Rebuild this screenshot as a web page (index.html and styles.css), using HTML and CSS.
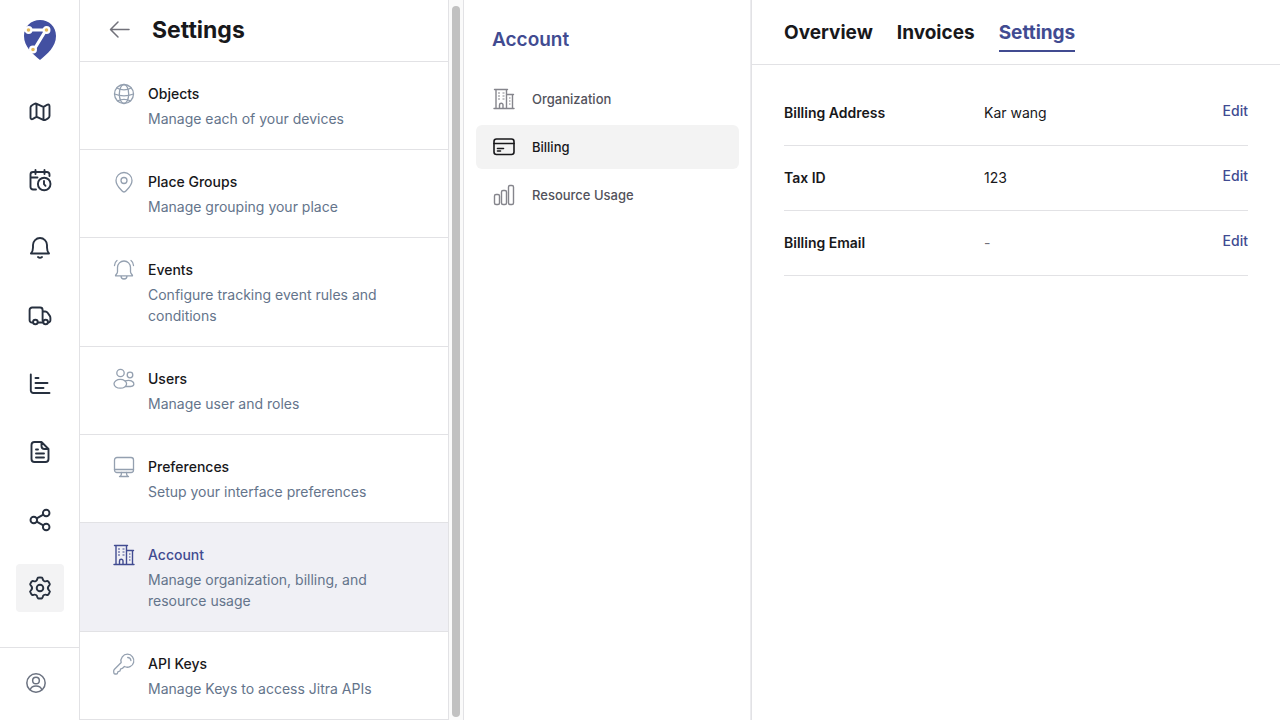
FILE: index.html
```html
<!DOCTYPE html>
<html lang="en">
<head>
<meta charset="utf-8">
<meta name="viewport" content="width=device-width, initial-scale=1">
<title>Account billing settings</title>
<link rel="stylesheet" href="styles.css">
</head>
<body>
<svg class="sprite" aria-hidden="true">
  <symbol id="building" viewBox="0 0 24 24">
    <path d="M2 21.500h20M4 21.500v-19M14.500 21.500v-19M2.500 2.500h13M14.500 7.500h7M20.500 7.500v14M7.500 21.500v-3.500a1.750 1.750 0 0 1 3.500 0v3.500" stroke-width="1.400"/>
    <path d="M6 6h2M6 9h2M6 12h2M10.500 6h2M10.500 9h2M10.500 12h2M17 11h1.500M17 14h1.500M17 17h1.500" stroke-width="1.200" stroke-linecap="butt"/>
  </symbol>
</svg>
<div class="app">
  <nav class="rail" aria-label="Main">
    <a class="logo" href="#" aria-label="Home">
      <svg width="34" height="42" viewBox="0 0 34 42">
        <path d="M17 1C26 1 33 7.500 33 17C33 28 24 35 17 41C10 35 1 28 1 17C1 7.500 8 1 17 1Z" fill="#4350a1"/>
        <path d="M0 11H6.500H23L10.500 31.500" fill="none" stroke="#fff" stroke-width="3.200" stroke-linejoin="round"/>
        <g fill="#e5b95b" stroke="#fff" stroke-width="2.200"><circle cx="5.500" cy="11" r="2.900"/><circle cx="23.500" cy="11" r="2.900"/><circle cx="10" cy="30.500" r="2.900"/></g>
      </svg>
    </a>
    <a class="rail-item" href="#" aria-label="Map"><svg viewBox="0 0 24 24"><path d="M2.500 7.600c0-1.200.4-1.700 1.500-2.300l2.200-1.300c1.100-.6 1.600-.7 2.600-.2l5.300 2.600c1 .5 1.500.4 2.400-.1l2.600-1.500c1.300-.7 2.400-.1 2.400 1.400v9.900c0 1.200-.4 1.700-1.500 2.300l-2.200 1.300c-1.100.6-1.600.7-2.600.2l-5.300-2.600c-1-.5-1.500-.4-2.400.1L4.900 18.900c-1.300.7-2.400.1-2.400-1.400zM8.500 4v13M15.500 6.600V20"/></svg></a>
    <a class="rail-item" href="#" aria-label="Schedule"><svg viewBox="0 0 24 24"><path d="M8 21.500H5a2.500 2.500 0 0 1-2.500-2.500V6.500A2.500 2.500 0 0 1 5 4h14a2.500 2.500 0 0 1 2.500 2.500V8M7.500 2v4M16.500 2v4M2.500 9.500h7"/><circle cx="16.200" cy="16" r="6.300"/><path d="M16 12.900v3.300l1.500 1.600"/></svg></a>
    <a class="rail-item" href="#" aria-label="Alerts"><svg viewBox="0 0 24 24"><path d="M3 17.500h18c-1.500-1.600-2-3.500-2-6V9a7 7 0 0 0-14 0v2.500c0 2.500-.5 4.400-2 6zM10 21q2 1.700 4 0"/></svg></a>
    <a class="rail-item" href="#" aria-label="Vehicles"><svg viewBox="0 0 24 24"><path d="M5 18.500H3.800a2.200 2.200 0 0 1-2.200-2.200V6A2.500 2.500 0 0 1 4.100 3.500h8A2.500 2.500 0 0 1 14.600 6v10.500M9.800 18.500h5.400M14.600 7.500h2.700c1 0 1.700.4 2.300 1.200l2.200 3.200c.5.700.6 1.300.6 2.100v2.200a2.300 2.300 0 0 1-2.300 2.300"/><circle cx="7.400" cy="18" r="2.300"/><circle cx="17.600" cy="18" r="2.300"/></svg></a>
    <a class="rail-item" href="#" aria-label="Reports"><svg viewBox="0 0 24 24"><path d="M2.800 2.500v16a2.500 2.500 0 0 0 2.500 2.500h16.200M7.500 6h3M7.500 11h12M7.500 16h8"/></svg></a>
    <a class="rail-item" href="#" aria-label="Documents"><svg viewBox="0 0 24 24"><path d="M13.500 2H6.500a3 3 0 0 0-3 3v14a3 3 0 0 0 3 3h11a3 3 0 0 0 3-3V9zM13.500 2v4a3 3 0 0 0 3 3h4M8 9.500h2M8 13.500h8M8 17.500h8"/></svg></a>
    <a class="rail-item" href="#" aria-label="Share"><svg viewBox="0 0 24 24"><circle cx="5.800" cy="12" r="3.300"/><circle cx="18.200" cy="5" r="3.300"/><circle cx="18.200" cy="19" r="3.300"/><path d="M8.700 10.400l6.600-3.800M8.700 13.600l6.600 3.800"/></svg></a>
    <a class="rail-item active" href="#" aria-label="Settings" aria-current="page"><svg viewBox="0 0 24 24"><circle cx="12" cy="12" r="3.300"/><path d="M21.300 7.100l-.5-.9c-.4-.6-.6-1-.9-1.100-.4-.2-.8-.1-1.500.1-1.800.6-3.400-.4-3.700-2.200-.3-.8-.4-1.100-.8-1.300C13.500 1.500 13.100 1.500 12 1.500s-1.500 0-1.900.2c-.4.200-.5.500-.8 1.300C9 4.800 7.400 5.800 5.600 5.200c-.7-.2-1.100-.3-1.500-.1-.3.100-.5.500-.9 1.100l-.5.900c-.4.700-.6 1-.5 1.400 0 .3.300.6.800 1.100 1.400 1.500 1.400 3.300 0 4.800-.5.500-.8.800-.8 1.100-.1.400.1.700.5 1.400l.5.900c.4.600.6 1 .9 1.100.4.200.8.100 1.500-.1 1.800-.6 3.400.4 3.700 2.200.3.800.4 1.100.8 1.300.4.200.8.200 1.900.2s1.500 0 1.900-.2c.4-.2.500-.5.800-1.300.3-1.800 1.900-2.800 3.700-2.200.7.200 1.100.3 1.500.1.300-.1.500-.5.900-1.100l.5-.9c.4-.7.600-1 .5-1.400 0-.3-.3-.6-.8-1.100-1.400-1.500-1.400-3.300 0-4.800.5-.5.800-.8.800-1.100.1-.4-.1-.7-.5-1.400z"/></svg></a>
    <div class="profile"><a class="profile-link" href="#" aria-label="Profile"><svg viewBox="0 0 24 24"><circle cx="12" cy="12" r="11"/><circle cx="12" cy="9" r="4"/><path d="M5 20q1.500-4.500 7-4.500t7 4.500"/></svg></a></div>
  </nav>

  <section class="settings" aria-labelledby="settings-title">
    <header class="settings-head">
      <button class="back" type="button" aria-label="Back"><svg viewBox="0 0 24 24"><path d="M21 11.500H3M10 4 2.500 11.500l7.500 7.500"/></svg></button>
      <h1 class="settings-title" id="settings-title">Settings</h1>
    </header>
    <a class="entry" href="#"><svg class="entry-icon" viewBox="0 0 24 24"><circle cx="12" cy="12" r="9.500"/><ellipse cx="12" cy="12" rx="4.700" ry="9.500"/><path d="M4.700 6q7.300 3.800 14.600 0M2.500 12q9.500 3.600 19 0M5.500 18.800q6.500-3 13 0"/></svg><span class="entry-text"><span class="entry-title">Objects</span><span class="entry-note">Manage each of your devices</span></span></a>
    <a class="entry" href="#"><svg class="entry-icon" viewBox="0 0 24 24"><path d="M12 22c-1.300 0-2-1.200-3-2.200-2.600-2.700-5-5.500-5-9.300a8 8 0 0 1 16 0c0 3.800-2.400 6.600-5 9.300-1 1-1.700 2.200-3 2.200z"/><circle cx="12" cy="10.500" r="3"/></svg><span class="entry-text"><span class="entry-title">Place Groups</span><span class="entry-note">Manage grouping your place</span></span></a>
    <a class="entry" href="#"><svg class="entry-icon" viewBox="0 0 24 24"><path d="M3.500 17.800c0-1.300 2-2 2-4V9.500a6.500 6.500 0 0 1 13 0v4.300c0 2 2 2.700 2 4zM9 18a3 3 0 0 0 6 0M5 2.500Q2.800 4 2.500 7.500M19 2.500q2.200 1.500 2.500 5"/></svg><span class="entry-text"><span class="entry-title">Events</span><span class="entry-note">Configure tracking event rules and conditions</span></span></a>
    <a class="entry" href="#"><svg class="entry-icon" viewBox="0 0 24 24"><circle cx="8.500" cy="6" r="3.700"/><circle cx="18" cy="8" r="2.800"/><ellipse cx="8.300" cy="16.800" rx="6.300" ry="4.400"/><path d="M13.200 13.800q6-1.300 8.300 1.700 1.500 3.500-3 4h-5"/></svg><span class="entry-text"><span class="entry-title">Users</span><span class="entry-note">Manage user and roles</span></span></a>
    <a class="entry" href="#"><svg class="entry-icon" viewBox="0 0 24 24"><rect x="2.500" y="2.500" width="19" height="15" rx="2.500"/><path d="M2.500 14.500h19M9.500 17.500c0 2 0 2.700-1 3.500M14.500 17.500c0 2 0 2.700 1 3.500M7.500 21.500h9"/></svg><span class="entry-text"><span class="entry-title">Preferences</span><span class="entry-note">Setup your interface preferences</span></span></a>
    <a class="entry selected" href="#" aria-current="true"><svg class="entry-icon"><use href="#building"/></svg><span class="entry-text"><span class="entry-title">Account</span><span class="entry-note">Manage organization, billing, and resource usage</span></span></a>
    <a class="entry" href="#"><svg class="entry-icon" viewBox="0 0 24 24"><path d="M15.500 2.200a6.500 6.500 0 0 0-6.300 8.300L2.500 17.200c-.7.700-.9 1.400-.8 2.300l.2 1.600c.1.600.5.900 1.100.9h1.300c1 0 1.300-.4 1.300-1.300 0-1 .4-1.400 1.400-1.400s1.300-.4 1.300-1.300c0-.9.400-1.300 1.300-1.400.7 0 1-.3 1.500-.8l1.300-1.300a6.500 6.500 0 1 0 3.100-12.300zM15.700 5.500q2.800 0 3.200 3"/></svg><span class="entry-text"><span class="entry-title">API Keys</span><span class="entry-note">Manage Keys to access Jitra APIs</span></span></a>
  </section>
  <div class="scroll-track" aria-hidden="true"><div class="scroll-thumb"></div></div>

  <nav class="account" aria-labelledby="account-title">
    <h2 class="account-title" id="account-title">Account</h2>
    <a class="account-link" href="#"><svg class="account-icon"><use href="#building"/></svg>Organization</a>
    <a class="account-link current" href="#" aria-current="page"><svg class="account-icon card" viewBox="0 0 24 24"><rect x="2" y="4" width="20" height="15.500" rx="2.500"/><path d="M2 8.500h20"/><path d="M5.500 16h3M5.500 13.500h6"/></svg>Billing</a>
    <a class="account-link" href="#"><svg class="account-icon" viewBox="0 0 24 24"><rect x="2.500" y="11.500" width="5" height="10" rx="1.500"/><rect x="9.500" y="7.500" width="5" height="14" rx="1.500"/><rect x="16.500" y="2.500" width="5" height="19" rx="1.500"/></svg>Resource Usage</a>
  </nav>

  <main class="main">
    <nav class="tabs" aria-label="Billing">
      <a class="tab" href="#">Overview</a>
      <a class="tab" href="#">Invoices</a>
      <a class="tab chosen" href="#" aria-current="page">Settings</a>
    </nav>
    <table class="details">
      <tbody>
        <tr><th scope="row">Billing Address</th><td>Kar wang</td><td class="action"><button class="edit" type="button">Edit</button></td></tr>
        <tr><th scope="row">Tax ID</th><td>123</td><td class="action"><button class="edit" type="button">Edit</button></td></tr>
        <tr><th scope="row">Billing Email</th><td class="empty">-</td><td class="action"><button class="edit" type="button">Edit</button></td></tr>
      </tbody>
    </table>
  </main>
</div>
</body>
</html>
```
FILE: styles.css
```css
* { box-sizing: border-box; }

body {
  margin: 0;
  color: #18181b;
  background: #fff;
  font: 14px/20px Inter, "Liberation Sans", sans-serif;
}

a { color: inherit; text-decoration: none; }
button { padding: 0; border: 0; background: none; font: inherit; cursor: pointer; }
h1, h2 { margin: 0; }
svg { display: block; fill: none; stroke: currentColor; stroke-linecap: round; stroke-linejoin: round; }
.logo svg { stroke: none; }
.sprite { position: absolute; width: 0; height: 0; }

.app { display: flex; min-height: 100vh; }

.rail {
  display: flex;
  flex: 0 0 80px;
  flex-direction: column;
  align-items: center;
  gap: 20px;
  padding-top: 19px;
  border-right: 1px solid #e2e2e5;
}
.logo { margin-bottom: 7px; }
.rail-item {
  display: grid;
  place-items: center;
  width: 48px;
  height: 48px;
  border-radius: 4px;
  color: #27303f;
}
.rail-item.active { background: #f3f3f4; }
.rail-item svg { width: 24px; height: 24px; stroke-width: 1.9; }
.profile {
  align-self: stretch;
  margin-top: auto;
  padding: 25px 26px 27px;
  border-top: 1px solid #e2e2e5;
  color: #6b7280;
}
.profile-link { display: block; width: 20px; }
.profile-link svg { width: 20px; height: 20px; stroke-width: 1.8; }

.settings { flex: 0 0 368px; }
.settings-head {
  display: flex;
  align-items: center;
  gap: 20px;
  padding: 14px 28px 15px;
  border-bottom: 1px solid #e2e2e5;
}
.back { color: #71717a; }
.back svg { width: 24px; height: 24px; stroke-width: 1.5; }
.settings-title { font-size: 23px; line-height: 32px; font-weight: 700; }
.entry {
  display: flex;
  gap: 12px;
  padding: 20px 32px;
  border-bottom: 1px solid #e2e2e5;
}
.entry-icon { flex: none; width: 24px; height: 24px; color: #94a0b0; stroke-width: 1.3; }
.entry-text { display: flex; flex-direction: column; gap: 2px; }
.entry-title { line-height: 24px; font-weight: 500; }
.entry-note { color: #64748b; line-height: 21px; }
.entry.selected { background: #f0f0f5; }
.selected .entry-icon, .selected .entry-title { color: #414b91; }

.scroll-track {
  display: flex;
  flex: 0 0 16px;
  padding: 6px 3px 3px;
  border: solid #e2e2e5;
  border-width: 0 1px;
  background: #fafafa;
}
.scroll-thumb { flex: 1; border-radius: 4px; background: #c1c1c1; }

.account {
  display: flex;
  flex: 0 0 288px;
  flex-direction: column;
  gap: 4px;
  padding: 24px 12px;
  border-right: 1px solid #e2e2e5;
  box-shadow: inset -1px 0 #ececef;
  color: #52525b;
}
.account-title {
  margin-bottom: 17px;
  padding: 0 16px;
  color: #414b91;
  font-size: 19px;
  line-height: 32px;
  font-weight: 600;
}
.account-link {
  display: flex;
  align-items: center;
  gap: 16px;
  padding: 10px 16px;
  border-radius: 6px;
  font-size: 13px;
  line-height: 24px;
  font-weight: 500;
}
.account-link.current { background: #f3f3f3; color: #18181b; }
.account-icon { width: 24px; height: 24px; color: #85858c; stroke-width: 1.4; }
.current .account-icon { color: #18181b; stroke-width: 1.6; }

.main { flex: 1; min-width: 0; }
.tabs {
  display: flex;
  gap: 24px;
  padding: 16px 32px 12px;
  border-bottom: 1px solid #e2e2e5;
}
.tab {
  border-bottom: 2px solid transparent;
  font-size: 19px;
  line-height: 34px;
  font-weight: 700;
}
.tab.chosen { border-color: #414b91; color: #414b91; }
.details {
  width: calc(100% - 64px);
  margin: 16px 32px;
  border-collapse: separate;
  border-spacing: 0;
}
.details th, .details td {
  padding: 20px 0;
  border-bottom: 1px solid #e2e2e5;
  line-height: 24px;
  text-align: left;
  vertical-align: top;
}
.details th { width: 200px; font-weight: 600; }
.details .empty { color: #71717a; }
.details .action { text-align: right; }
.edit { display: block; margin-left: auto; color: #414b91; line-height: 20px; font-weight: 500; }
```
